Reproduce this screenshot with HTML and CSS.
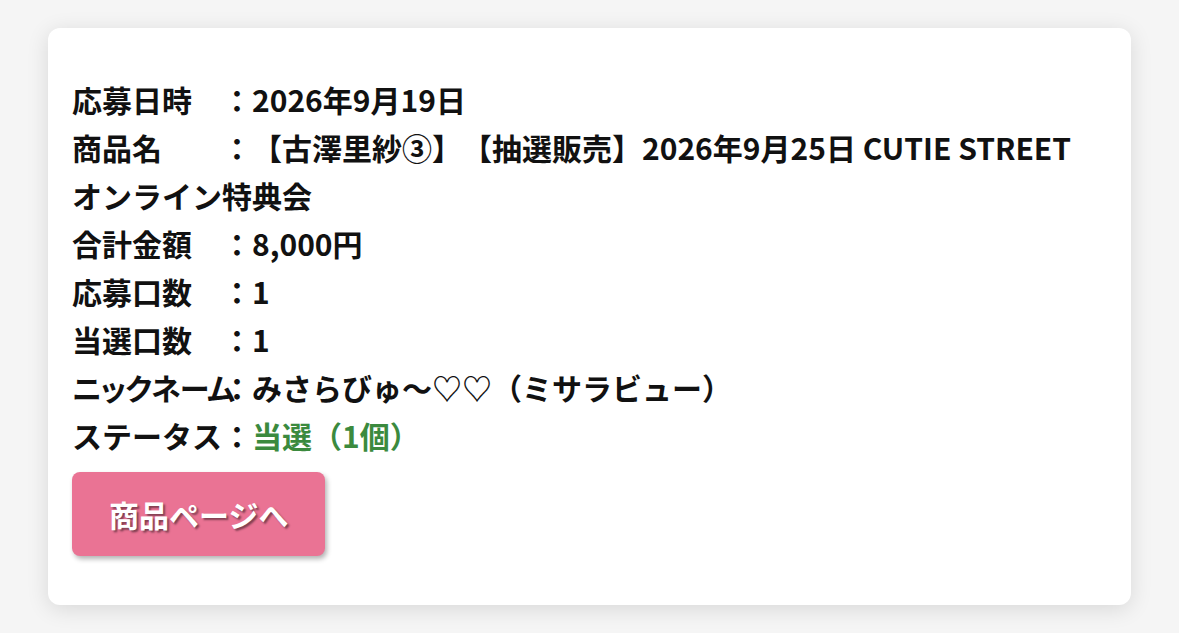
FILE: index.html
```html
<!DOCTYPE html>
<html lang="ja">

<head>
  <meta charset="UTF-8" />
  <meta name="viewport" content="width=device-width, initial-scale=1.0" />
  <title>応募履歴</title>
  <link rel="stylesheet" href="styles.css">
</head>

<body>
  <div class="entry-card">
    <div class="entry-row"><span class="label">応募日時</span>：2026年9月19日</div>
    <div class="entry-row"><span class="label">商品名</span>：【古澤里紗③】【抽選販売】2026年9月25日 CUTIE STREET オンライン特典会</div>
    <div class="entry-row"><span class="label">合計金額</span>：8,000円</div>
    <div class="entry-row"><span class="label">応募口数</span>：1</div>
    <div class="entry-row"><span class="label">当選口数</span>：1</div>
    <div class="entry-row"><span class="label label-tight">ニックネーム</span>：みさらびゅ〜♡♡（ミサラビュー）</div>
    <div class="entry-row"><span class="label">ステータス</span>：<span class="status-won">当選（1個）</span></div>
    <a class="product-btn" href="#">商品ページへ</a>
  </div>
</body>

</html>
```

FILE: styles.css
```css
body {
  margin: 0;
  padding: 28px 48px 29px;
  background: #f5f5f5;
  font-family: "Noto Sans CJK JP", "Noto Sans", sans-serif;
  color: #111;
}

.entry-card {
  background: #fff;
  border-radius: 12px;
  box-shadow: 0 4px 22px rgba(0, 0, 0, 0.12);
  padding: 47px 24px 49px;
}

.entry-row {
  font-size: 30px;
  font-weight: bold;
  line-height: 48px;
  text-spacing-trim: space-all;
}

.label {
  display: inline-block;
  width: 150px;
  white-space: nowrap;
}

.label-tight {
  font-feature-settings: "palt";
  letter-spacing: -0.8px;
}

.status-won {
  color: #3b8a3e;
}

.product-btn {
  display: inline-flex;
  align-items: center;
  justify-content: center;
  margin-top: 13px;
  height: 84px;
  padding: 0 37px;
  border-radius: 8px;
  background: #ea7394;
  color: #fff;
  font-size: 30px;
  font-weight: bold;
  text-decoration: none;
  text-shadow: 2px 2px 2px rgba(0, 0, 0, 0.45);
  box-shadow: 2px 3px 5px rgba(0, 0, 0, 0.3);
}
```
